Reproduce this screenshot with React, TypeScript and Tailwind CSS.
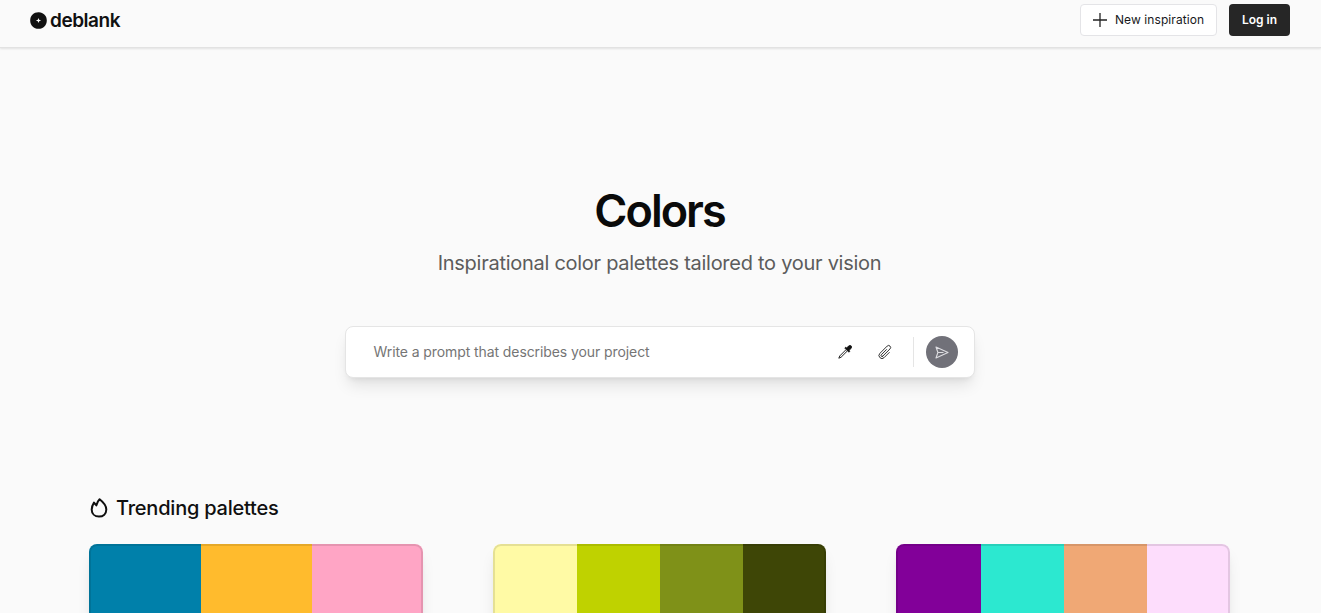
const palettes = [
  ["bg-[#0080aa]", "bg-[#ffbb2d]", "bg-[#ffa5c5]"],
  ["bg-[#fffaa5]", "bg-[#bfd200]", "bg-[#7f9118]", "bg-[#3e4606]"],
  ["bg-[#820099]", "bg-[#2ce8d0]", "bg-[#f0a875]", "bg-[#fdddfc]"],
];

function Logo() {
  return (
    <div className="flex items-center gap-[3px] text-[#111]">
      <svg className="size-[17px]" viewBox="0 0 17 17" fill="currentColor">
        <path d="M8.5 .2C11 .1 13 1 14.3 2.6C16 4.1 16.8 6 16.8 8.5C16.8 11 16 13 14.4 14.4C13 16 11 16.8 8.5 16.8C6 16.8 4.1 16 2.6 14.4C1 13 .2 11 .2 8.5C.2 6 1 4.1 2.6 2.6C4.1 1 6 .2 8.5 .2Z" />
        <path fill="#fff" d="M8.5 5.9L9.2 7.8L11.1 8.5L9.2 9.2L8.5 11.1L7.8 9.2L5.9 8.5L7.8 7.8Z" />
      </svg>
      <span className="pt-0.5 text-[19px] leading-6 font-semibold tracking-[-0.45px]">deblank</span>
    </div>
  );
}

function PlusIcon() {
  return (
    <svg className="size-[14px] shrink-0" viewBox="0 0 14 14" fill="none" stroke="#222" strokeWidth="1.3">
      <path d="M7 0V14M0 7H14" />
    </svg>
  );
}

function DropperIcon() {
  return (
    <svg className="size-[14px]" viewBox="0 0 14 14" fill="none">
      <path d="M8 4.7L1.8 10.9L.8 13.2L3.1 12.2L9.3 6" stroke="#222" strokeWidth="1" strokeLinejoin="round" />
      <path d="M6.8 3.1L7.6 2.3L8.7 3L10.5 1.1C11.3 .2 12.5 .2 13.2 .9C13.9 1.6 13.8 2.7 13 3.5L11.1 5.3L11.7 6.4L10.9 7.2Z" fill="#111" stroke="#111" strokeWidth=".9" strokeLinejoin="round" />
    </svg>
  );
}

function ClipIcon() {
  return (
    <svg className="size-[16px]" viewBox="0 0 24 24" fill="none" stroke="#222" strokeWidth="1.4" strokeLinecap="round" strokeLinejoin="round">
      <path d="m18.375 12.739-7.693 7.693a4.5 4.5 0 0 1-6.364-6.364l10.94-10.94A3 3 0 1 1 19.5 7.372L8.552 18.32m.009-.01-.01.01m5.699-9.941-7.81 7.81a1.5 1.5 0 0 0 2.112 2.13" />
    </svg>
  );
}

function SendIcon() {
  return (
    <svg className="h-[13px] w-[14px]" viewBox="0 0 14 13" fill="none" stroke="#dedee2" strokeWidth="1.1" strokeLinejoin="round">
      <path d="M1 1L13 6.5L1 12L2.9 6.5ZM2.9 6.5H8.5" />
    </svg>
  );
}

function FlameIcon() {
  return (
    <svg className="h-[20px] w-[18px]" viewBox="0 0 18 20" fill="none" stroke="#0f0f0f" strokeWidth="2" strokeLinejoin="round">
      <path d="M9.6 1.3C8 2.8 6.9 4.9 6.4 7.4L4 4.6C2.6 6.8 1.7 9.2 1.7 11.4C1.7 15.8 4.8 18.6 9 18.6C13.2 18.6 16.3 15.8 16.3 11.5C16.3 7.4 12.8 3.8 9.6 1.3Z" />
    </svg>
  );
}

function Palette({ colors }: { colors: string[] }) {
  return (
    <div className="relative flex h-[200px] overflow-hidden rounded-lg shadow-[0_10px_15px_-3px_rgba(0,0,0,0.1),0_4px_6px_-4px_rgba(0,0,0,0.1)]">
      {colors.map((color) => (
        <div key={color} className={`flex-[1_1_0px] first:basis-[1.5px] last:basis-[2px] ${color}`} />
      ))}
      <div className="pointer-events-none absolute inset-0 rounded-lg border-2 border-black/10" />
    </div>
  );
}

export default function App() {
  return (
    <div className="flex h-screen flex-col overflow-hidden bg-[#fafafa] font-['Inter',sans-serif] text-[#0f0f0f]">
      <header className="flex h-12 shrink-0 items-start justify-between border-b border-[#e2e2e2] pt-1 pr-[31px] pl-[30px] shadow-[0_1px_2px_rgba(0,0,0,0.1)]">
        <div className="flex h-8 items-center">
          <Logo />
        </div>
        <div className="flex gap-3">
          <button className="flex h-8 w-[137px] items-center gap-2 rounded border border-[#e4e4e7] bg-white pl-3 text-[12px] font-normal whitespace-nowrap text-[#18181b]">
            <PlusIcon />
            <span className="tracking-[0.08px]">New inspiration</span>
          </button>
          <button className="h-8 w-[61px] rounded bg-[#262626] text-[12px] font-semibold whitespace-nowrap text-white">Log in</button>
        </div>
      </header>

      <main className="flex flex-col">
        <section className="flex flex-col items-center pt-[139px] pr-[2px]">
          <h1 className="text-[45px] leading-[48px] font-semibold tracking-[-2px] text-[#0a0a0a]">Colors</h1>
          <p className="mt-[14px] text-[20px] leading-7 font-normal tracking-[-0.27px] text-[#5c5c5c]">Inspirational color palettes tailored to your vision</p>
          <div className="mt-[49px] flex h-[52px] w-[630px] items-center rounded-lg border border-[#e5e5e5] bg-white pr-4 pl-7 shadow-[0_10px_15px_-3px_rgba(0,0,0,0.1),0_4px_6px_-4px_rgba(0,0,0,0.1)]">
            <span className="flex-1 text-[14px] leading-5 tracking-[-0.09px] text-[#757575]">Write a prompt that describes your project</span>
            <button className="flex size-10 items-center justify-center"><DropperIcon /></button>
            <button className="flex size-10 items-center justify-center"><ClipIcon /></button>
            <div className="mr-3 ml-2 h-[30px] w-px bg-[#e5e5e5]" />
            <button className="flex size-8 items-center justify-center rounded-full bg-[#717179]"><SendIcon /></button>
          </div>
        </section>

        <section className="pt-[116px] pr-[91px] pl-[89px]">
          <h2 className="flex h-7 items-center gap-2 pl-px text-[20px] font-medium">
            <FlameIcon />
            <span className="tracking-[-0.22px]">Trending palettes</span>
          </h2>
          <div className="mt-[22px] grid grid-cols-3 gap-[70px]">
            {palettes.map((colors) => (
              <Palette key={colors[0]} colors={colors} />
            ))}
          </div>
        </section>
      </main>
    </div>
  );
}
